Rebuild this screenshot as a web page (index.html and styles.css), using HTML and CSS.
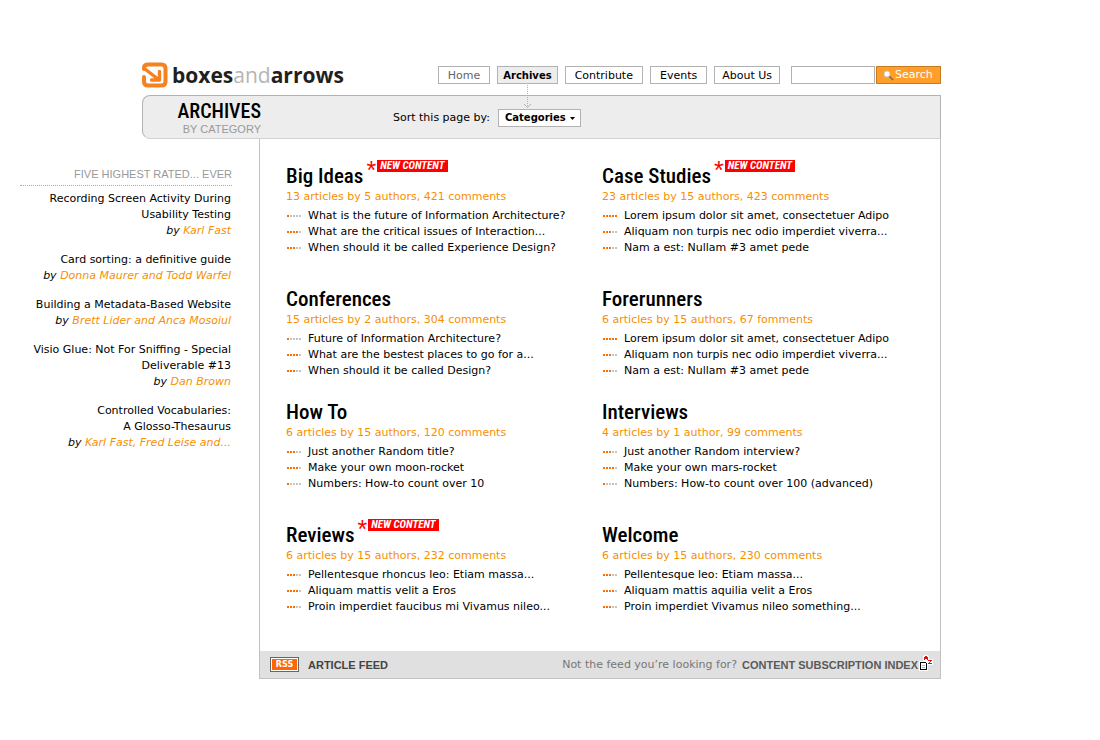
FILE: index.html
```html
<!DOCTYPE html>
<html lang="en">
<head>
<meta charset="utf-8">
<title>Boxes and Arrows: Archives</title>
<link rel="stylesheet" href="styles.css">
</head>
<body>
<div class="page">
  <header class="masthead">
    <a class="logo" href="#">
      <svg class="logo-mark" viewBox="0 0 26 26" width="26" height="26" aria-hidden="true">
        <path d="M2 7V6Q2 2.500 6 2.500H19.500Q23.500 2.500 23.500 6.500V19.500Q23.500 23.500 19.500 23.500H6Q2 23.500 2 19.500V15" fill="none" stroke="#f58220" stroke-width="4" stroke-linecap="round"/>
        <path d="M3 7L16.500 17.500M17.500 9.500V18H9.500" fill="none" stroke="#f58220" stroke-width="3.400" stroke-linecap="round" stroke-linejoin="round"/>
      </svg>
      <span class="logo-text">boxes<span class="logo-and">and</span>arrows</span>
    </a>
    <nav class="nav">
      <a class="nav-link nav-home" href="#">Home</a>
      <a class="nav-link nav-current" href="#" aria-current="page">Archives
        <svg class="nav-arrow" viewBox="0 0 7 23" width="7" height="23" aria-hidden="true">
          <path d="M3.500 0V22" stroke="#b2b2b2" stroke-dasharray="1 1"/>
          <path d="M0 19h1v1h1v1h1v1h1v-1h1v-1h1v-1h1v1h-1v1h-1v1h-1v1h-1v-1h-1v-1h-1v-1h-1z" fill="#b2b2b2"/>
        </svg>
      </a>
      <a class="nav-link" href="#">Contribute</a>
      <a class="nav-link" href="#">Events</a>
      <a class="nav-link nav-about" href="#">About Us</a>
    </nav>
    <form class="search">
      <input class="search-box" type="text" aria-label="Search terms">
      <button class="search-button" type="submit">
        <svg viewBox="0 0 11 11" width="11" height="11" aria-hidden="true">
          <path d="M6 6L10 10" stroke="#8a6440" stroke-width="1.600"/>
          <circle cx="4" cy="4" r="3" fill="#fff" stroke="#c9c9c9"/>
        </svg>
        Search
      </button>
    </form>
  </header>

  <div class="titlebar">
    <div class="titles">
      <h1 class="title">ARCHIVES</h1>
      <p class="subtitle">BY CATEGORY</p>
    </div>
    <div class="sorting">
      <label for="sort">Sort this page by:</label>
      <span class="sort-wrap">
        <select class="sort" id="sort"><option>Categories</option></select>
        <svg class="sort-caret" viewBox="0 0 5 3" width="5" height="3" aria-hidden="true"><path d="M0 0h5L2.500 3z"/></svg>
      </span>
    </div>
  </div>

  <div class="columns">
    <aside class="rated">
      <h2 class="rated-title">FIVE HIGHEST RATED... EVER</h2>
      <ul class="rated-list">
        <li>Recording Screen Activity During Usability Testing<br><i>by <a href="#">Karl Fast</a></i></li>
        <li>Card sorting: a definitive guide<br><i>by <a href="#">Donna Maurer and Todd Warfel</a></i></li>
        <li>Building a Metadata-Based Website<br><i>by <a href="#">Brett Lider and Anca Mosoiul</a></i></li>
        <li>Visio Glue: Not For Sniffing - Special Deliverable #13<br><i>by <a href="#">Dan Brown</a></i></li>
        <li>Controlled Vocabularies:<br>A Glosso-Thesaurus<br><i>by <a href="#">Karl Fast, Fred Leise and...</a></i></li>
      </ul>
    </aside>

    <main class="content">
      <div class="categories">
        <section class="category category-tall">
          <h2 class="name">Big Ideas<span class="star">*</span><span class="new">NEW CONTENT</span></h2>
          <p class="stats">13 articles by 5 authors, 421 comments</p>
          <ul class="articles">
            <li><span class="rating rating-1"></span>What is the future of Information Architecture?</li>
            <li><span class="rating rating-4"></span>What are the critical issues of Interaction...</li>
            <li><span class="rating rating-3"></span>When should it be called Experience Design?</li>
          </ul>
        </section>
        <section class="category category-tall">
          <h2 class="name">Case Studies<span class="star">*</span><span class="new">NEW CONTENT</span></h2>
          <p class="stats">23 articles by 15 authors, 423 comments</p>
          <ul class="articles">
            <li><span class="rating rating-5"></span>Lorem ipsum dolor sit amet, consectetuer Adipo</li>
            <li><span class="rating rating-3"></span>Aliquam non turpis nec odio imperdiet viverra...</li>
            <li><span class="rating rating-3"></span>Nam a est: Nullam #3 amet pede</li>
          </ul>
        </section>
        <section class="category">
          <h2 class="name">Conferences</h2>
          <p class="stats">15 articles by 2 authors, 304 comments</p>
          <ul class="articles">
            <li><span class="rating rating-1"></span>Future of Information Architecture?</li>
            <li><span class="rating rating-4"></span>What are the bestest places to go for a...</li>
            <li><span class="rating rating-3"></span>When should it be called Design?</li>
          </ul>
        </section>
        <section class="category">
          <h2 class="name">Forerunners</h2>
          <p class="stats">6 articles by 15 authors, 67 fomments</p>
          <ul class="articles">
            <li><span class="rating rating-5"></span>Lorem ipsum dolor sit amet, consectetuer Adipo</li>
            <li><span class="rating rating-3"></span>Aliquam non turpis nec odio imperdiet viverra...</li>
            <li><span class="rating rating-3"></span>Nam a est: Nullam #3 amet pede</li>
          </ul>
        </section>
        <section class="category category-tall">
          <h2 class="name">How To</h2>
          <p class="stats">6 articles by 15 authors, 120 comments</p>
          <ul class="articles">
            <li><span class="rating rating-3"></span>Just another Random title?</li>
            <li><span class="rating rating-4"></span>Make your own moon-rocket</li>
            <li><span class="rating rating-1"></span>Numbers: How-to count over 10</li>
          </ul>
        </section>
        <section class="category category-tall">
          <h2 class="name">Interviews</h2>
          <p class="stats">4 articles by 1 author, 99 comments</p>
          <ul class="articles">
            <li><span class="rating rating-3"></span>Just another Random interview?</li>
            <li><span class="rating rating-4"></span>Make your own mars-rocket</li>
            <li><span class="rating rating-1"></span>Numbers: How-to count over 100 (advanced)</li>
          </ul>
        </section>
        <section class="category">
          <h2 class="name">Reviews<span class="star">*</span><span class="new">NEW CONTENT</span></h2>
          <p class="stats">6 articles by 15 authors, 232 comments</p>
          <ul class="articles">
            <li><span class="rating rating-3"></span>Pellentesque rhoncus leo: Etiam massa...</li>
            <li><span class="rating rating-4"></span>Aliquam mattis velit a Eros</li>
            <li><span class="rating rating-3"></span>Proin imperdiet faucibus mi Vivamus nileo...</li>
          </ul>
        </section>
        <section class="category">
          <h2 class="name">Welcome</h2>
          <p class="stats">6 articles by 15 authors, 230 comments</p>
          <ul class="articles">
            <li><span class="rating rating-3"></span>Pellentesque leo: Etiam massa...</li>
            <li><span class="rating rating-4"></span>Aliquam mattis aquilia velit a Eros</li>
            <li><span class="rating rating-3"></span>Proin imperdiet Vivamus nileo something...</li>
          </ul>
        </section>
      </div>
      <footer class="feeds">
        <a class="rss" href="#">RSS</a>
        <a class="feed-link" href="#">ARTICLE FEED</a>
        <span class="feed-note">Not the feed you’re looking for?</span>
        <a class="index-link" href="#">CONTENT SUBSCRIPTION INDEX</a>
        <svg class="index-icon" viewBox="0 0 15 17" width="15" height="17" aria-hidden="true">
          <path d="M5 1h1V0h4v1h1v3h4v6h-5v6H1V6h4z" fill="#fff"/>
          <path d="M2 7h6v1h1v7H2zM3 8v6h5V8z" fill="#000" fill-rule="evenodd"/>
          <path d="M4 10h3v1h-3zM4 12h3v1h-3z" fill="#bbb"/>
          <path d="M7 1h2v1h1v3h-1v-1h-2v1h-1v-3h1zM10 5h4v1h-1v1h-1v1h2v1h-4v-1h1v-1h1v-1h-2z" fill="#e01010"/>
        </svg>
      </footer>
    </main>
  </div>
</div>
</body>
</html>
```

FILE: styles.css
```css
* { box-sizing: border-box; }

body {
  margin: 0;
  background: #fff;
  color: #000;
  font: 11px/16px "DejaVu Sans", sans-serif;
}

h1, h2, p, ul { margin: 0; padding: 0; font-weight: normal; }
ul { list-style: none; }
a { color: inherit; text-decoration: none; }
svg { display: block; flex: none; }

.page {
  max-width: 941px;
  padding: 62px 0 60px 20px;
}

/* Masthead */
.masthead {
  display: flex;
  align-items: center;
  height: 26px;
  margin: 0 0 7px 122px;
}
.logo { display: flex; align-items: center; gap: 4px; }
.logo-text {
  color: #231f20;
  font: bold 21px/26px "Open Sans", sans-serif;
}
.logo-and { color: #b5b5b5; font-weight: 400; }
.nav { display: flex; gap: 7px; margin-left: auto; }
.nav-link {
  position: relative;
  height: 18px;
  padding: 0 9px;
  border: 1px solid #b2b2b2;
  line-height: 17px;
}
.nav-home { color: #666; }
.nav-about { padding: 0 7px; }
.nav-current {
  padding: 0 5px;
  background: #ededed;
  font-size: 10px;
  font-weight: bold;
}
.nav-arrow { position: absolute; top: 18px; left: 26px; z-index: 1; }
.search { display: flex; gap: 1px; margin-left: 11px; }
.search-box {
  width: 84px;
  height: 18px;
  border: 1px solid #b2b2b2;
  background: #fff;
}
.search-button {
  display: flex;
  align-items: center;
  gap: 1px;
  width: 65px;
  height: 18px;
  padding: 0 6px;
  border: 1px solid #c67c1e;
  background: #ff9f29;
  color: #fff;
  font: 11px/16px "DejaVu Sans", sans-serif;
}

/* Title bar */
.titlebar {
  display: flex;
  align-items: center;
  height: 44px;
  margin-left: 122px;
  border: 1px solid #b2b2b2;
  border-bottom-color: #d2d2d2;
  border-radius: 8px 0 0 8px;
  background: #ededed;
}
.titles { width: 118px; text-align: right; }
.title { font: 500 20px/24px "Roboto Condensed", Roboto, sans-serif; }
.subtitle { color: #999; font: 11px/12px "Liberation Sans", sans-serif; }
.sorting {
  display: flex;
  align-items: center;
  gap: 8px;
  margin-left: 132px;
  padding-top: 2px;
}
.sort-wrap { position: relative; }
.sort {
  display: block;
  width: 83px;
  height: 18px;
  padding: 0 6px;
  border: 1px solid #b2b2b2;
  border-radius: 0;
  background: #fff;
  color: #000;
  appearance: none;
  font: bold 10px/16px "DejaVu Sans", sans-serif;
}
.sort-caret { position: absolute; right: 6px; top: 8px; }

/* Columns */
.columns { display: grid; grid-template-columns: 239px 1fr; }

.rated { padding: 28px 28px 0 0; text-align: right; }
.rated-title {
  margin: 0 -1px 5px 0;
  padding-bottom: 4px;
  border-bottom: 1px dotted #aaa;
  color: #999;
  font: 11px/14px "Liberation Sans", sans-serif;
}
.rated-list { display: grid; gap: 13px; }
.rated-list a { color: #f78f00; }

.content {
  display: flex;
  flex-direction: column;
  border: 1px solid #c2c2c2;
  border-top: 0;
}
.categories {
  display: grid;
  grid-template-columns: 316px 1fr;
  padding: 20px 0 20px 26px;
}
.category { padding-bottom: 16px; }
.category-tall { padding-bottom: 26px; }
.name {
  display: flex;
  height: 30px;
  font: 500 21px/34px "Roboto Condensed", Roboto, sans-serif;
}
.star { margin: 0 1px 0 3px; color: #f00; font: 25px/22px "Liberation Sans", sans-serif; }
.new {
  height: 12px;
  margin-top: 1px;
  padding: 0 3px;
  background: #f00;
  color: #fff;
  font: italic bold 11px/12px "Roboto Condensed", Roboto, sans-serif;
}
.stats { margin-bottom: 3px; color: #f78f00; }
.articles li { display: flex; align-items: center; gap: 7px; white-space: nowrap; }

/* Five-dot rating: orange dots over grey ones */
.rating {
  width: 14px;
  height: 2px;
  margin-left: 1px;
  background:
    repeating-linear-gradient(to right, #ff6f00 0 2px, #fff 2px 3px) 0 0 / 15px 2px no-repeat,
    repeating-linear-gradient(to right, #c4c4c4 0 2px, #fff 2px 3px);
}
.rating-1 { background-size: 3px 2px, auto; }
.rating-3 { background-size: 9px 2px, auto; }
.rating-4 { background-size: 12px 2px, auto; }

.feeds {
  display: flex;
  align-items: center;
  height: 27px;
  margin-top: auto;
  padding: 0 7px 0 10px;
  background: #e0e0e0;
  color: #777;
}
.rss {
  width: 29px;
  height: 15px;
  border: 1px solid #666;
  background: #ff6600;
  box-shadow: inset 0 0 0 1px #fff;
  color: #fff;
  font-size: 8px;
  font-weight: bold;
  line-height: 13px;
  text-align: center;
}
.feed-link, .index-link { color: #444; font: bold 11px/16px "Liberation Sans", sans-serif; }
.feed-link { margin-left: 9px; }
.feed-note { margin-left: auto; }
.index-link { margin-left: 5px; color: #5a5a5a; }
.index-icon { margin-bottom: 2px; }
```
